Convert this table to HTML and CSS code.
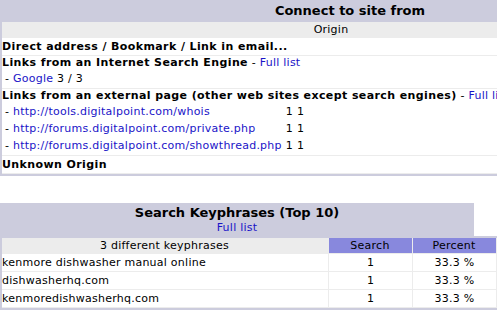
FILE: index.html
```html
<html>
	<head>
		<link rel="stylesheet" href="styles.css">
	</head>
	<body>
		<!-- origin of the visits -->
		<table class="aws_border origin_block">
			<tr>
				<td class="aws_title origin_title">Connect to site from</td>
				<td class="aws_blank">&nbsp;</td>
			</tr>
			<tr>
				<td class="aws_inner" colspan="2">
					<table class="aws_data origin_data">
						<tr><th class="row_title">Origin</th></tr>
						<tr><td class="aws"><b>Direct address / Bookmark / Link in email...</b></td></tr>
						<tr>
							<td class="aws group">
								<b>Links from an Internet Search Engine</b> - <a href="#">Full list</a>
								<table class="sub">
									<tr><td class="aws">- <a href="#">Google</a> 3 / 3</td></tr>
								</table>
							</td>
						</tr>
						<tr>
							<td class="aws group">
								<b>Links from an external page (other web sites except search engines)</b> - <a href="#">Full list</a>
								<table class="sub">
									<tr><td class="aws">- <a href="#">http://tools.digitalpoint.com/whois</a></td><td>1</td><td>1</td></tr>
									<tr><td class="aws">- <a href="#">http://forums.digitalpoint.com/private.php</a></td><td>1</td><td>1</td></tr>
									<tr><td class="aws">- <a href="#">http://forums.digitalpoint.com/showthread.php</a></td><td>1</td><td>1</td></tr>
								</table>
							</td>
						</tr>
						<tr><td class="aws"><b>Unknown Origin</b></td></tr>
					</table>
				</td>
			</tr>
		</table>

		<!-- keyphrases -->
		<table class="aws_border keys_block">
			<tr>
				<td class="aws_title keys_title">
					<div>Search Keyphrases (Top 10)</div>
					<div class="title_link"><a href="#">Full list</a></div>
				</td>
				<td class="aws_blank">&nbsp;</td>
			</tr>
			<tr>
				<td class="aws_inner" colspan="2">
					<table class="aws_data keys_data">
						<tr>
							<th class="row_title">3 different keyphrases</th>
							<th class="col_s">Search</th>
							<th class="col_s">Percent</th>
						</tr>
						<tr><td class="aws">kenmore dishwasher manual online</td><td>1</td><td>33.3 %</td></tr>
						<tr><td class="aws">dishwasherhq.com</td><td>1</td><td>33.3 %</td></tr>
						<tr><td class="aws">kenmoredishwasherhq.com</td><td>1</td><td>33.3 %</td></tr>
					</table>
				</td>
			</tr>
		</table>
	</body>
</html>
```

FILE: styles.css
```css
html, body {
	margin: 0;
	padding: 0;
	overflow: hidden;
	background-color: #FFFFFF;
}
body, table, td, th, a {
	font: 11px/13px "DejaVu Sans", Verdana, sans-serif;
	letter-spacing: 0.25px;
	color: #000000;
}
a {
	color: #1A14C8;
	text-decoration: none;
}
b {
	font-weight: bold;
	letter-spacing: 0.4px;
}
table {
	border-collapse: separate;
	border-spacing: 0;
}
.aws_border {
	background-color: #CCCCDD;
}
td.aws_title, .aws_title div {
	font: bold 13px/15.4px "DejaVu Sans", Verdana, sans-serif;
	letter-spacing: 0;
}
.aws_title {
	text-align: center;
	padding: 2px;
	background-color: #CCCCDD;
}
td.aws_blank {
	background-color: #FFFFFF;
	padding: 2px;
	border: none;
}
td.aws_inner {
	padding: 2px;
	border: none;
}
.aws_data {
	width: 100%;
	background-color: #FFFFFF;
}
th {
	font-weight: normal;
	padding: 1px 2px 1px 1px;
	border-right: 1px solid #ECECEC;
	border-bottom: 1px solid #ECECEC;
	text-align: center;
	white-space: nowrap;
}
td {
	padding: 2px;
	text-align: center;
	vertical-align: middle;
	border-right: 1px solid #ECECEC;
	border-bottom: 1px solid #ECECEC;
	white-space: nowrap;
}
td.aws {
	text-align: left;
	padding: 2px 0;
}
td.group {
	padding: 0;
}
.row_title {
	background-color: #ECECEC;
}
.col_s {
	width: 80px;
	background-color: #8888DD;
}

/* connect to site from */
.origin_block {
	width: 1000px;
}
td.origin_title {
	width: 696px;
	padding-top: 3px;
	border: none;
}
.origin_data {
	width: 660px;
}

/* nested lists of referers */
.sub {
	border-spacing: 2px;
}
.sub td, .sub td.aws {
	padding: 1px;
	border: none;
}

/* search keyphrases */
.keys_block {
	width: 499px;
	margin-top: 27px;
}
td.keys_title {
	width: 470px;
	border: none;
}
.aws_title div.title_link, .aws_title div.title_link a {
	font: 11px/13px "DejaVu Sans", Verdana, sans-serif;
	letter-spacing: 0.25px;
}
```
